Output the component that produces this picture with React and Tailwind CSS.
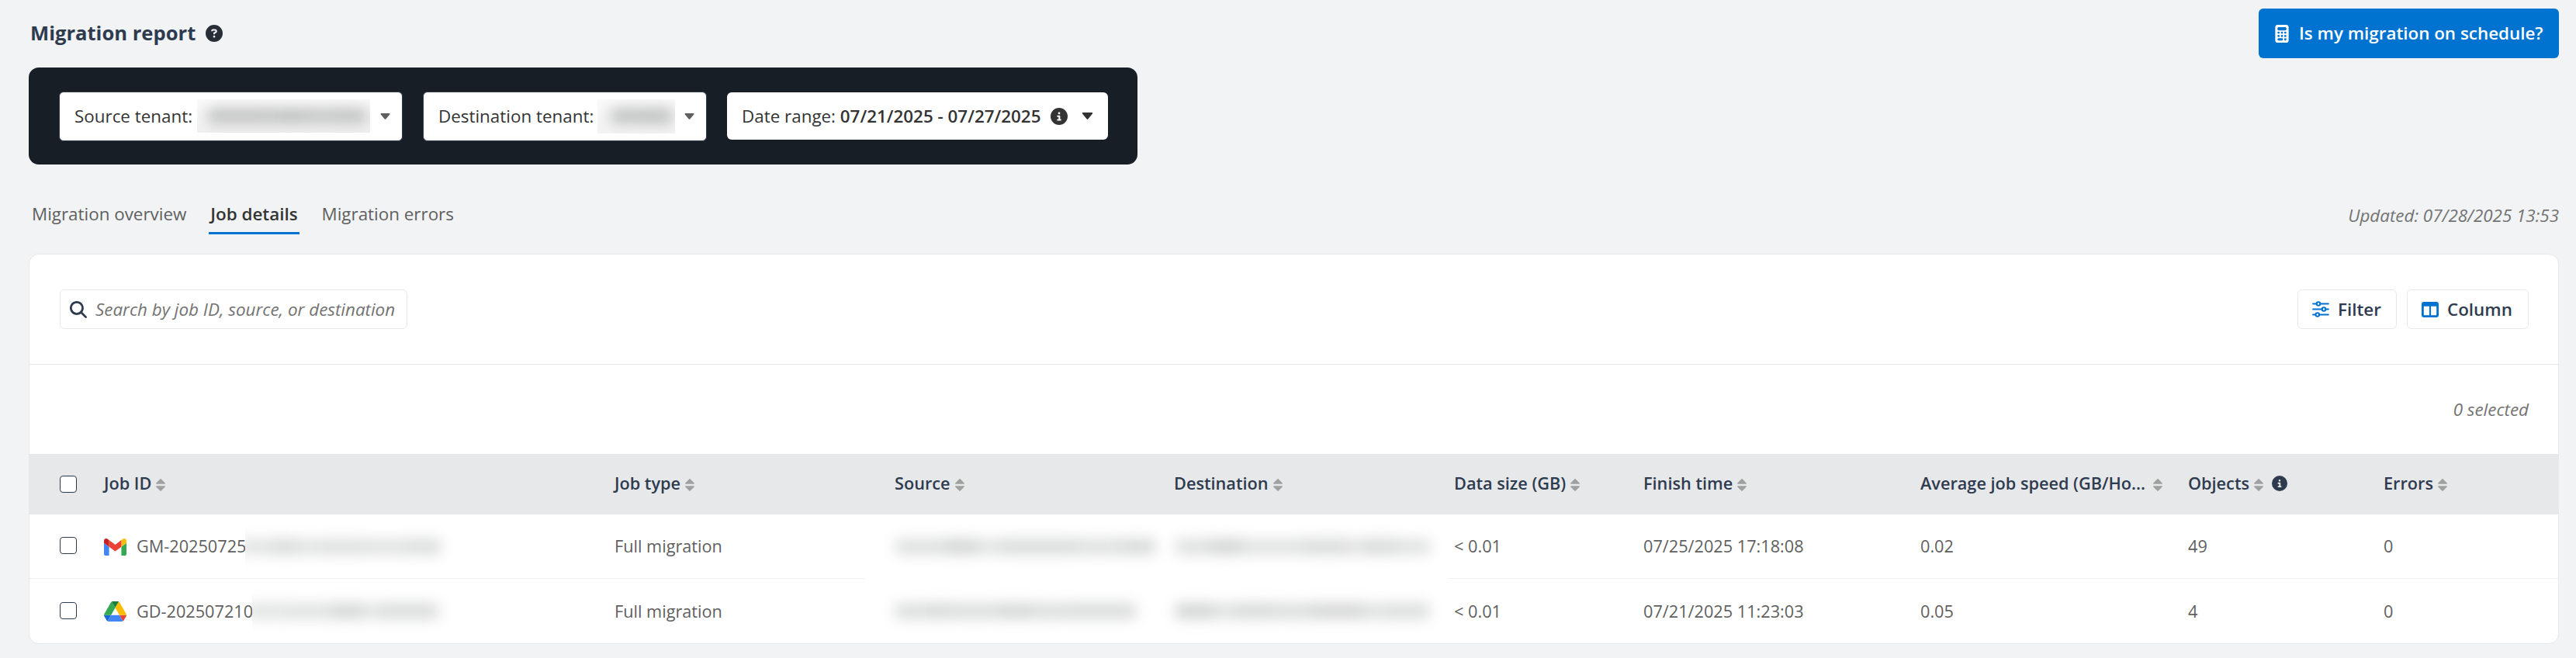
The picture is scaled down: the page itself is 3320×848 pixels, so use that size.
import { FaCircleQuestion, FaCalculator, FaCircleInfo, FaMagnifyingGlass } from "react-icons/fa6";
import clsx from "clsx";

const GRID = "grid grid-cols-[96px_658px_322px_399px_354px_251px_357px_345px_252px_1fr]";

const tabs = [
    { name: "Migration overview" },
    { name: "Job details", active: true },
    { name: "Migration errors" },
];

const columns = [
    { name: "Job ID" },
    { name: "Job type" },
    { name: "Source", className: "pl-[39px]" },
    { name: "Destination" },
    { name: "Data size (GB)", className: "pl-[7px]" },
    { name: "Finish time" },
    { name: "Average job speed (GB/Ho...", wide: true },
    { name: "Objects", info: true },
    { name: "Errors" },
];

// Redacted values are lists of [width, opacity] word shapes
const jobs = [
    {
        icon: "gmail",
        id: "GM-20250725",
        idMask: [[42, 0.65], [35, 0.85], [25, 0.65], [60, 0.75], [55, 0.7], [43, 0.8]],
        type: "Full migration",
        source: [[65, 0.75], [40, 1], [30, 0.65], [100, 0.85], [55, 0.75], [45, 0.9]],
        destination: [[45, 0.75], [40, 1], [80, 0.7], [60, 0.85], [15, 0.6], [45, 0.9], [43, 0.7]],
        size: "< 0.01",
        finished: "07/25/2025 17:18:08",
        speed: "0.02",
        objects: "49",
        errors: "0",
    },
    {
        icon: "drive",
        id: "GD-202507210",
        idMask: [[50, 0.65], [60, 0.7], [40, 0.95], [22, 0.65], [76, 0.85]],
        type: "Full migration",
        source: [[40, 0.8], [30, 0.9], [65, 0.8], [40, 0.95], [50, 0.8], [85, 0.85]],
        destination: [[50, 1], [25, 0.7], [50, 0.9], [50, 0.8], [70, 0.95], [20, 0.7], [62, 0.8]],
        size: "< 0.01",
        finished: "07/21/2025 11:23:03",
        speed: "0.05",
        objects: "4",
        errors: "0",
    },
];

const Caret = ({ className }) => (
    <svg viewBox="0 0 14 9" className={clsx("shrink-0", className)} fill="currentColor">
        <path d="M1.2 0h11.6c.9 0 1.3 1 .7 1.6L7.8 8.5c-.4.5-1.2.5-1.6 0L.5 1.6C-.1 1 .3 0 1.2 0Z" />
    </svg>
);

const SortIcon = () => (
    <svg viewBox="0 0 12 16" className="mt-[3px] h-4 w-3 shrink-0 text-[#a0a0a0]" fill="currentColor">
        <path d="M5.300 .4 .3 5.400C-.2 5.900 0 6.700 .8 6.700H11.200C12 6.700 12.200 5.900 11.700 5.400L6.700 .4C6.300 0 5.700 0 5.300 .4Z" />
        <path d="M5.300 15.600 .3 10.600C-.2 10.100 0 9.300 .8 9.300H11.200C12 9.300 12.200 10.100 11.700 10.600L6.700 15.600C6.300 16 5.700 16 5.300 15.600Z" />
    </svg>
);

const GmailIcon = () => (
    <svg viewBox="52 42 88 66" className="mt-[2px] h-[22px] w-[29px]">
        <path fill="#4285f4" d="M58 108h14V74L52 59v43c0 3.320 2.690 6 6 6" />
        <path fill="#34a853" d="M120 108h14c3.320 0 6-2.690 6-6V59l-20 15" />
        <path fill="#fbbc04" d="M120 48v26l20-15v-8c0-7.420-8.470-11.650-14.400-7.200" />
        <path fill="#ea4335" d="M72 74V48l24 18 24-18v26L96 92" />
        <path fill="#c5221f" d="M52 51v8l20 15V48l-5.600-4.200c-5.940-4.450-14.400-.22-14.400 7.200" />
    </svg>
);

const DriveIcon = () => (
    <svg viewBox="0 0 87.3 78" className="h-[26px] w-[29px]">
        <path fill="#1967d2" d="m6.600 66.850 3.850 6.650c.8 1.400 1.950 2.500 3.300 3.300l13.750-23.800h-27.500c0 1.550.4 3.100 1.200 4.500z" />
        <path fill="#34a853" d="m43.650 25-13.750-23.800c-1.350.8-2.500 1.900-3.300 3.300l-25.400 44a9.060 9.060 0 0 0 -1.200 4.500h27.500z" />
        <path fill="#ea4335" d="m73.550 76.800c1.350-.8 2.500-1.900 3.300-3.300l1.600-2.750 7.650-13.250c.8-1.400 1.200-2.950 1.200-4.500h-27.502z" />
        <path fill="#188038" d="m43.650 25 13.750-23.800c-1.350-.8-2.900-1.200-4.500-1.200h-18.500c-1.600 0-3.150.45-4.500 1.200z" />
        <path fill="#4285f4" d="m59.800 53h-32.300l-13.750 23.800c1.350.8 2.900 1.200 4.500 1.200h50.800c1.600 0 3.150-.45 4.500-1.200z" />
        <path fill="#fbbc04" d="m73.400 26.500-12.700-22c-.8-1.400-1.950-2.500-3.300-3.300l-13.750 23.800 16.150 28h27.450c0-1.550-.4-3.100-1.200-4.500z" />
    </svg>
);

const SlidersIcon = () => (
    <svg viewBox="0 0 22 21" className="h-[21px] w-[22px]" fill="none" stroke="#0073d1" strokeWidth="2.200">
        <path strokeLinecap="round" d="M1.200 3.500h4M11 3.500h9.800M1.200 10.500h11M18 10.500h2.800M1.200 17.500h2.800M9.500 17.500h11.300" />
        <circle cx="8" cy="3.500" r="2.300" strokeWidth="2" />
        <circle cx="15" cy="10.500" r="2.300" strokeWidth="2" />
        <circle cx="6.800" cy="17.500" r="2.300" strokeWidth="2" />
    </svg>
);

const ColumnsIcon = () => (
    <svg viewBox="0 0 22 20" className="h-5 w-[22px]">
        <path
            fill="#0073d1"
            fillRule="evenodd"
            d="M2.800 0h16.400C20.700 0 22 1.300 22 2.800v14.400c0 1.500-1.300 2.800-2.800 2.800H2.800C1.300 20 0 18.700 0 17.200V2.800C0 1.300 1.300 0 2.800 0ZM2.800 5.700V16.500c0 .4.300.7.700.7H9.900V5.700ZM12.100 5.700V17.200h6.400c.4 0 .7-.3.700-.7V5.700Z"
        />
    </svg>
);

const Checkbox = () => (
    <span className="block size-[22px] rounded-[4px] border-[1.5px] border-[#2e3b4e] bg-white" />
);

const Smudge = ({ words, className }) => (
    <div className={clsx("flex h-[19px] shrink-0 blur-[9px]", className)}>
        {words.map(([width, opacity], i) => (
            <span key={i} className="h-full bg-[#d0d1d1]" style={{ width, opacity }} />
        ))}
    </div>
);

const JobRow = ({ job, last }) => {
    const cell = clsx("flex items-center", !last && "border-b border-[#eeeff0]");

    return (
        <div className={clsx(GRID, "h-[83px] text-[21.7px] text-[#5f5f5f]")}>
            <div className={clsx(cell, "pb-[2px] pl-[39px]")}>
                <Checkbox />
            </div>
            <div className={cell}>
                {job.icon === "gmail" ? <GmailIcon /> : <DriveIcon />}
                <span className={clsx("ml-[13px] shrink-0", last ? "w-[149px]" : "w-[140px]")}>{job.id}</span>
                <div className={clsx("flex h-16 items-center overflow-hidden bg-white", last ? "w-[270px]" : "w-[280px]")}>
                    <Smudge words={job.idMask} className="-ml-2" />
                </div>
            </div>
            <div className={cell}>{job.type}</div>
            <div className="flex items-center pl-[40px]">
                <Smudge words={job.source} />
            </div>
            <div className="flex items-center pl-[2px]">
                <Smudge words={job.destination} />
            </div>
            <div className={clsx(cell, "pl-[7px]")}>{job.size}</div>
            <div className={cell}>{job.finished}</div>
            <div className={cell}>{job.speed}</div>
            <div className={cell}>{job.objects}</div>
            <div className={cell}>{job.errors}</div>
        </div>
    );
};

const App = () => {
    return (
        <div className="h-[848px] w-[3320px] overflow-hidden bg-[#f1f3f5] pl-[37px] pr-[22px] pt-[11px] font-['Open_Sans',sans-serif] text-[22.4px] leading-[32px] whitespace-nowrap">
            {/* Title bar */}
            <header className="flex h-16 items-center justify-between">
                <div className="flex items-center gap-[13px] pl-[2px]">
                    <h1 className="pb-px text-[25.6px] font-bold text-[#2e3b4e]">Migration report</h1>
                    <FaCircleQuestion className="size-[22px] text-[#272e35]" />
                </div>
                <button className="flex h-16 w-[387px] items-center rounded-[6px] bg-[#0073d1] pl-[21px] font-semibold text-white">
                    <FaCalculator className="mr-[13px] h-[23px] w-[18px]" />
                    Is my migration on schedule?
                </button>
            </header>

            {/* Filters */}
            <section className="mt-3 flex h-[125px] w-[1429px] items-center rounded-[13px] bg-[#171e26] pl-[39px] text-[#333333]">
                <div className="flex h-16 w-[443px] items-center rounded-[6px] border border-[#2e3b4e] bg-white pl-[19px]">
                    Source tenant:
                    <div className="ml-[6px] flex h-[43px] w-[223px] items-center overflow-hidden bg-linear-to-b from-[#fafafa] to-[#f0f0f0]">
                        <Smudge words={[[75, 0.95], [15, 0.9], [35, 1], [40, 0.9], [40, 0.95]]} className="ml-[14px] brightness-90" />
                    </div>
                    <Caret className="ml-[13px] h-2 w-[13px] text-[#5f5f5f]" />
                </div>
                <div className="ml-[26px] flex h-16 w-[366px] items-center rounded-[6px] border border-[#2e3b4e] bg-white pl-[19px]">
                    Destination tenant:
                    <div className="ml-[5px] flex h-[44px] w-[100px] items-center overflow-hidden bg-linear-to-b from-[#fafafa] to-[#f3f3f3]">
                        <Smudge words={[[35, 0.95], [45, 1]]} className="ml-[17px] brightness-90" />
                    </div>
                    <Caret className="ml-[12px] h-2 w-[13px] text-[#5f5f5f]" />
                </div>
                <div className="ml-[26px] flex h-[61px] w-[491px] items-center rounded-[6px] bg-white pl-[19px]">
                    Date range:&nbsp;<span className="font-semibold">07/21/2025 - 07/27/2025</span>
                    <FaCircleInfo className="ml-[13px] size-[22px]" />
                    <Caret className="ml-[18px] h-[9px] w-[15px]" />
                </div>
            </section>

            {/* Tabs */}
            <nav className="mt-[48px] flex h-[42px] items-start justify-between">
                <ul className="flex gap-[27px] pl-[2px]">
                    {tabs.map((tab) => (
                        <li
                            key={tab.name}
                            className={clsx(
                                "h-[42px] px-[2px]",
                                tab.active
                                    ? "border-b-[3px] border-[#0073d1] font-semibold text-[#333333]"
                                    : "text-[#5f5f5f]"
                            )}
                        >
                            {tab.name}
                        </li>
                    ))}
                </ul>
                <span className="pt-[2px] italic text-[#737373]">Updated: 07/28/2025 13:53</span>
            </nav>

            {/* Job table */}
            <main className="mt-[25px] h-[503px] overflow-hidden rounded-[13px] border border-[#e7e8ea] bg-white">
                <div className="flex h-[142px] items-center justify-between border-b border-[#e5e7e9] pl-[39px] pr-[38px]">
                    <div className="flex h-[51px] w-[448px] items-center rounded-[6px] border border-[#e7e8ea] pl-3 italic text-[#737373]">
                        <FaMagnifyingGlass className="mr-[11px] size-[22px] text-[#2e3b4e]" />
                        Search by job ID, source, or destination
                    </div>
                    <div className="flex gap-[13px] font-semibold text-[#2e3b4e]">
                        <button className="flex h-[51px] w-[128px] items-center gap-[11px] rounded-[6px] border border-[#e7e8ea] pl-[18px]">
                            <SlidersIcon />
                            Filter
                        </button>
                        <button className="flex h-[51px] w-[157px] items-center gap-[11px] rounded-[6px] border border-[#e7e8ea] pl-[18px]">
                            <ColumnsIcon />
                            Column
                        </button>
                    </div>
                </div>
                <div className="flex h-[115px] items-center justify-end pr-[38px] italic text-[#737373]">0 selected</div>

                <div className={clsx(GRID, "h-[78px] bg-[#e7e8ea] text-[21.7px] font-semibold text-[#2e3b4e]")}>
                    <div className="flex items-center pl-[39px]">
                        <Checkbox />
                    </div>
                    {columns.map((col) => (
                        <div key={col.name} className={clsx("flex items-center pb-[2px]", col.wide ? "gap-[10px]" : "gap-[6px]", col.className)}>
                            {col.name}
                            <SortIcon />
                            {col.info && <FaCircleInfo className="ml-[5px] size-5" />}
                        </div>
                    ))}
                </div>

                {jobs.map((job, i) => (
                    <JobRow key={job.id} job={job} last={i === jobs.length - 1} />
                ))}
            </main>
        </div>
    );
};

export default App;
